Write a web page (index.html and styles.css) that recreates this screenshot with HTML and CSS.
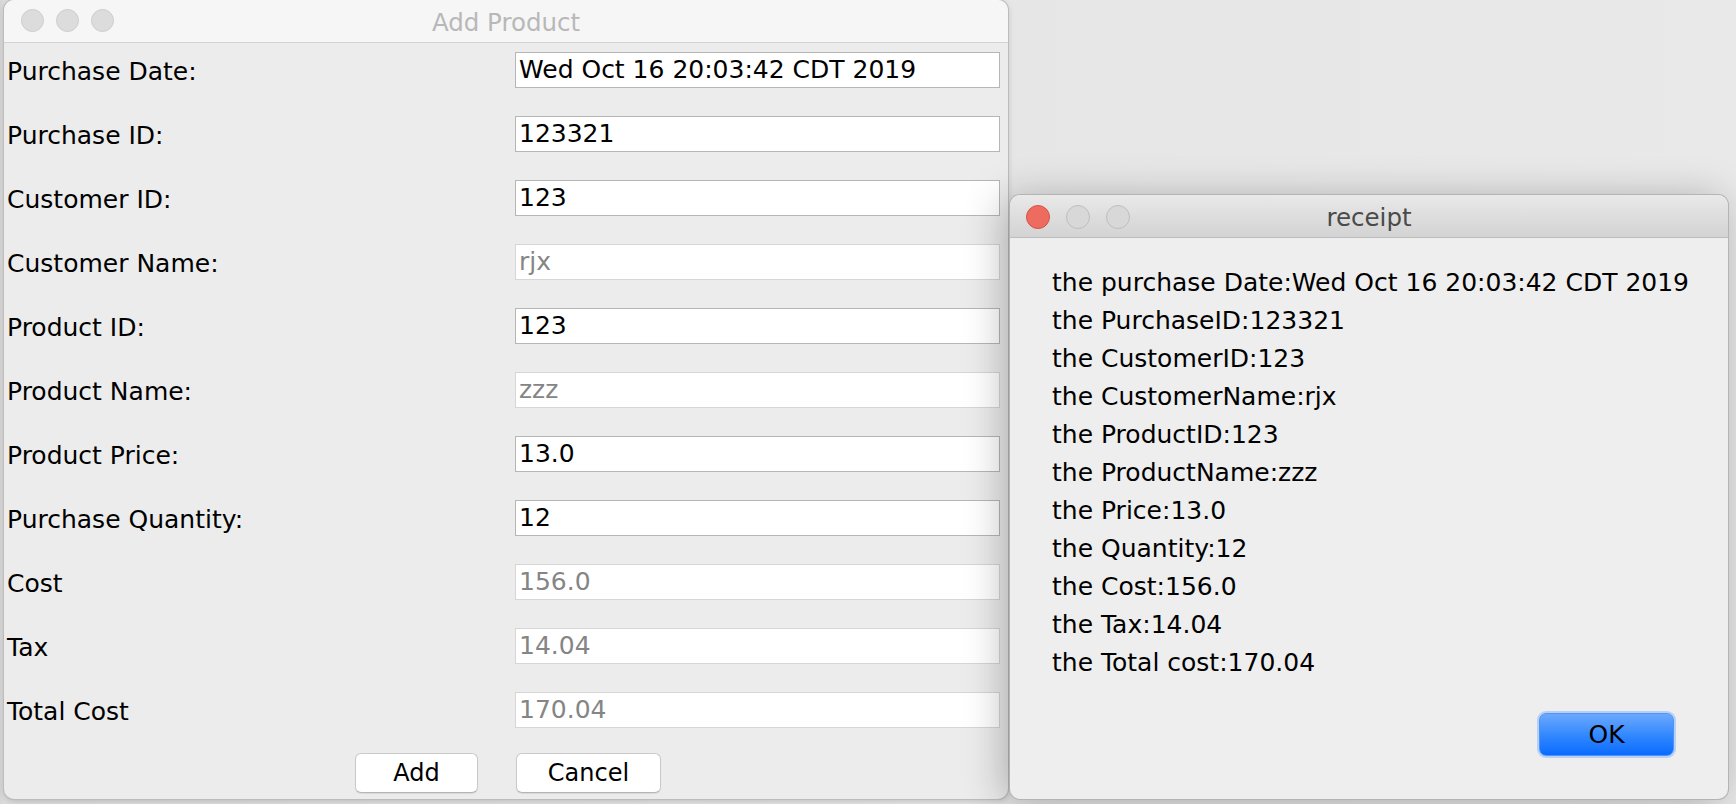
FILE: index.html
```html
<!DOCTYPE html>
<html>
<head>
<meta charset="utf-8">
<title>Add Product</title>
<link rel="stylesheet" href="styles.css">
</head>
<body>
<div class="desktop">
  <section class="window win-add">
    <header class="titlebar inactive">
      <div class="lights lights-add"><span class="light"></span><span class="light"></span><span class="light"></span></div>
      <div class="title">Add Product</div>
      <div></div>
    </header>
    <div class="form">
      <div class="lbl">Purchase Date:</div><div class="field">Wed Oct 16 20:03:42 CDT 2019</div>
      <div class="lbl">Purchase ID:</div><div class="field">123321</div>
      <div class="lbl">Customer ID:</div><div class="field">123</div>
      <div class="lbl">Customer Name:</div><div class="field disabled">rjx</div>
      <div class="lbl">Product ID:</div><div class="field">123</div>
      <div class="lbl">Product Name:</div><div class="field disabled">zzz</div>
      <div class="lbl">Product Price:</div><div class="field">13.0</div>
      <div class="lbl">Purchase Quantity:</div><div class="field">12</div>
      <div class="lbl">Cost</div><div class="field disabled">156.0</div>
      <div class="lbl">Tax</div><div class="field disabled">14.04</div>
      <div class="lbl">Total Cost</div><div class="field disabled">170.04</div>
    </div>
    <div class="buttons">
      <button class="btn btn-add">Add</button>
      <button class="btn btn-cancel">Cancel</button>
    </div>
  </section>

  <section class="window win-receipt">
    <header class="titlebar active">
      <div class="lights lights-receipt"><span class="light red"></span><span class="light"></span><span class="light"></span></div>
      <div class="title">receipt</div>
      <div></div>
    </header>
    <div class="receipt-body">
      <div class="line">the purchase Date:Wed Oct 16 20:03:42 CDT 2019</div>
      <div class="line">the PurchaseID:123321</div>
      <div class="line">the CustomerID:123</div>
      <div class="line">the CustomerName:rjx</div>
      <div class="line">the ProductID:123</div>
      <div class="line">the ProductName:zzz</div>
      <div class="line">the Price:13.0</div>
      <div class="line">the Quantity:12</div>
      <div class="line">the Cost:156.0</div>
      <div class="line">the Tax:14.04</div>
      <div class="line">the Total cost:170.04</div>
    </div>
    <div class="receipt-actions">
      <button class="btn-ok">OK</button>
    </div>
  </section>
</div>
</body>
</html>
```
FILE: styles.css
```css
* { box-sizing: border-box; }
html, body {
  margin: 0;
  padding: 0;
}
body {
  width: 1736px;
  height: 804px;
  overflow: hidden;
  background: #e3e3e3;
  font-family: "DejaVu Sans", "Liberation Sans", sans-serif;
  color: #000;
}
.desktop {
  position: relative;
  width: 1736px;
  height: 804px;
  background: linear-gradient(90deg, #d6d6d6 0px, #dcdcdc 4px, #e6e6e6 1010px, #e9e9e9 1736px);
}
.window {
  position: absolute;
  background: #ececec;
  border-radius: 10px;
  overflow: hidden;
  display: flex;
  flex-direction: column;
}
.win-add {
  left: 4px;
  top: 0;
  width: 1004px;
  height: 799px;
  box-shadow: 0 0 0 1px #bcbcbc, 0 2px 6px rgba(0,0,0,0.18);
}
.win-receipt {
  left: 1010px;
  top: 195px;
  width: 718px;
  height: 604px;
  background: #eeeeee;
  box-shadow: 0 0 0 1px #b4b4b4, -6px 4px 40px rgba(0,0,0,0.28);
}
.titlebar {
  height: 43px;
  flex: none;
  display: grid;
  grid-template-columns: 1fr auto 1fr;
  align-items: center;
  border-bottom: 1px solid #d4d4d4;
}
.titlebar.inactive {
  background: #f6f6f6;
  color: #b8b8b8;
}
.titlebar.active {
  background: linear-gradient(#e9e9e9, #d3d3d3);
  border-bottom-color: #bdbdbd;
  color: #4a4a4a;
}
.title {
  font-size: 24.5px;
  line-height: 28px;
  padding-top: 3px;
}
.lights {
  display: flex;
  align-items: center;
}
.lights-add {
  padding-left: 17px;
  gap: 12px;
  margin-top: -2px;
}
.lights-add .light {
  width: 23px;
  height: 23px;
  border-radius: 50%;
  background: #dcdcdc;
  border: 1px solid #cdcdcd;
}
.lights-receipt {
  padding-left: 16px;
  gap: 16px;
  margin-top: 1px;
}
.lights-receipt .light {
  width: 24px;
  height: 24px;
  border-radius: 50%;
  background: #d8d8d8;
  border: 1px solid #bebebe;
}
.lights-receipt .light.red {
  background: #ee6b5f;
  border-color: #d65246;
}
.form {
  display: grid;
  grid-template-columns: 1fr 485px;
  grid-auto-rows: 36px;
  row-gap: 28px;
  padding: 9px 8px 0 3px;
}
.lbl {
  font-size: 25px;
  line-height: 36px;
  padding-top: 2px;
  white-space: nowrap;
}
.field {
  background: #fff;
  border: 1px solid #b6b6b6;
  font-size: 25px;
  line-height: 34px;
  padding: 0 3px;
  white-space: nowrap;
  overflow: hidden;
}
.field.disabled {
  border-color: #d6d6d6;
  color: #858585;
}
.buttons {
  display: flex;
  justify-content: center;
  gap: 38px;
  margin-top: 25px;
  padding-left: 4px;
}
.btn {
  height: 40px;
  background: #fff;
  border: 1px solid #c9c9c9;
  border-bottom-color: #b5b5b5;
  border-radius: 6px;
  font-family: "DejaVu Sans", "Liberation Sans", sans-serif;
  font-size: 24px;
  color: #000;
  padding: 0;
  box-shadow: 0 1px 1px rgba(0,0,0,0.08);
}
.btn-add { width: 123px; }
.btn-cancel { width: 145px; }
.receipt-body {
  padding: 26px 0 0 42px;
}
.line {
  font-size: 25px;
  line-height: 38px;
  white-space: nowrap;
}
.receipt-actions {
  display: flex;
  justify-content: flex-end;
  padding: 31px 54px 0 0;
}
.btn-ok {
  width: 135px;
  height: 43px;
  border-radius: 7px;
  border: 1px solid #4d95fb;
  background: linear-gradient(#6ca9fd, #2f86fe 55%, #0a6bff);
  box-shadow: 0 0 0 2px rgba(120,170,255,0.45);
  font-family: "DejaVu Sans", "Liberation Sans", sans-serif;
  font-size: 25px;
  color: #000;
  padding: 0;
}
```
